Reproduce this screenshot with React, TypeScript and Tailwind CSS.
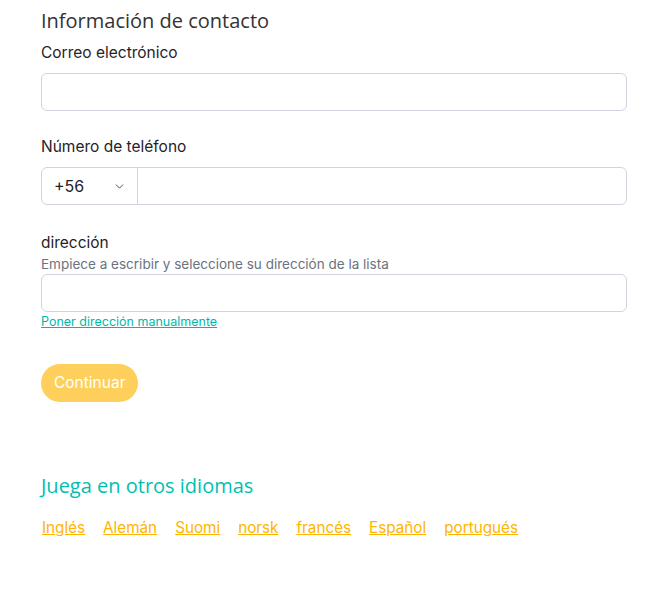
import { ChevronDown } from "lucide-react";

const languages = ["Inglés", "Alemán", "Suomi", "norsk", "francés", "Español", "portugués"];

export default function App() {
  return (
    <div className="min-h-[606px] bg-white pl-[41px] pr-[20px] pt-[8px] font-['Inter',sans-serif] text-[#1f2328]">
      <h2 className="font-['Open_Sans',sans-serif] text-[20px] leading-[26px] text-[#333]">Información de contacto</h2>

      <label className="mt-[8px] block text-[15.5px] leading-[22px]">Correo electrónico</label>
      <input className="mt-[9px] block h-[38px] w-full rounded-[6px] border border-[#d0d4dc] px-3" />

      <label className="mt-[25px] block text-[15.5px] leading-[22px]">Número de teléfono</label>
      <div className="mt-[9px] flex h-[38px] w-full rounded-[6px] border border-[#d0d4dc]">
        <div className="flex w-[96px] items-center justify-between border-r border-[#d0d4dc] pl-[12px] pr-[11px] text-[16px]">
          <span>+56</span>
          <ChevronDown className="h-[13px] w-[13px] text-[#444]" strokeWidth={1.75} />
        </div>
        <input className="flex-1 px-3" />
      </div>

      <label className="mt-[27px] block text-[15.5px] leading-[22px]">dirección</label>
      <p className="mt-px text-[13.5px] leading-[18px] text-[#6b7280]">Empiece a escribir y seleccione su dirección de la lista</p>
      <input className="mt-px block h-[38px] w-full rounded-[6px] border border-[#d0d4dc] px-3" />
      <a href="#" className="mt-px block text-[12.5px] leading-[18px] text-[#00b8ad] underline">
        Poner dirección manualmente
      </a>

      <button className="mt-[33px] h-[38px] rounded-full bg-[#ffcf5c] px-[13px] text-[15.5px] text-white">Continuar</button>

      <h2 className="mt-[71px] font-['Open_Sans',sans-serif] text-[20px] leading-[26px] text-[#00bfb2]">Juega en otros idiomas</h2>
      <div className="mt-[18px] flex gap-[18px] pl-px">
        {languages.map((lang) => (
          <a key={lang} href="#" className="text-[15.25px] leading-[22px] text-[#ffb400] underline">
            {lang}
          </a>
        ))}
      </div>
    </div>
  );
}
